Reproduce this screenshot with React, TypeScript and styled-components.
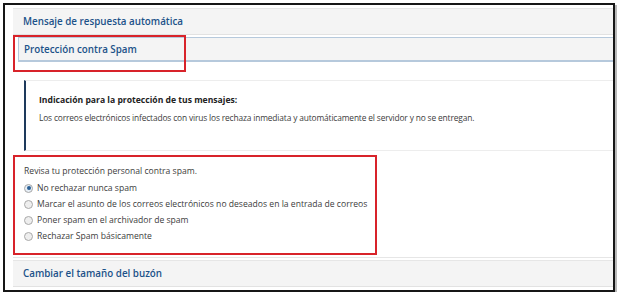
import styled, { createGlobalStyle } from 'styled-components';

const GlobalStyle = createGlobalStyle`
  html, body {
    margin: 0;
    padding: 0;
    background: #ffffff;
  }
  body {
    font-family: 'Open Sans', 'DejaVu Sans', sans-serif;
    color: #333333;
  }
`;

const Frame = styled.div`
  position: relative;
  margin: 3px 0 0 3px;
  width: 608px;
  height: 285px;
  border: 2px solid #161616;
  box-shadow: 2px 2px 0 #b9b9b9;
  overflow: hidden;
  background: #ffffff;
`;

const Content = styled.div`
  display: flex;
  flex-direction: column;
  padding: 3px 0 0 8px;
`;

const PanelHeader = styled.div<{ $active?: boolean }>`
  display: flex;
  align-items: center;
  height: ${(p) => (p.$active ? '22px' : '25px')};
  margin-left: ${(p) => (p.$active ? '5px' : '0')};
  margin-right: -20px;
  padding-left: ${(p) => (p.$active ? '5px' : '10px')};
  background: #f4f4f4;
  border-top: 1px solid ${(p) => (p.$active ? '#b6c9dc' : '#e6e6e6')};
  border-bottom: ${(p) => (p.$active ? '2px solid #b6c9dc' : '1px solid #e2e2e2')};
  border-left: ${(p) => (p.$active ? '1px solid #b6c9dc' : 'none')};
  color: #1c5289;
  font-size: 9.8px;
  font-weight: 600;
`;

const InfoBox = styled.div`
  display: flex;
  flex-direction: column;
  gap: 6px;
  margin: 18px -20px 0 11px;
  padding: 13px 0 27px 13px;
  border-left: 2px solid #1e3a5c;
  border-top: 1px solid #ededed;
  border-bottom: 1px solid #ededed;
  font-size: 8.4px;
  letter-spacing: -0.15px;
  color: #3c3c3c;
`;

const InfoTitle = styled.div`
  font-size: 8.6px;
  font-weight: 700;
  letter-spacing: 0;
  color: #222222;
`;

const Options = styled.div`
  display: flex;
  flex-direction: column;
  margin-top: 11px;
  padding-left: 11px;
  font-size: 8.6px;
  color: #3c3c3c;
`;

const Lead = styled.div`
  height: 18px;
  line-height: 18px;
`;

const OptionRow = styled.label`
  display: flex;
  align-items: center;
  gap: 4px;
  height: 16px;
`;

const Radio = styled.span<{ $checked?: boolean }>`
  position: relative;
  width: 7px;
  height: 7px;
  border-radius: 50%;
  border: 1px solid #a9a9a9;
  background: ${(p) => (p.$checked ? '#e6eef6' : '#eeeeee')};
  flex: none;

  &::after {
    content: '';
    display: ${(p) => (p.$checked ? 'block' : 'none')};
    position: absolute;
    left: 1.5px;
    top: 1.5px;
    width: 4px;
    height: 4px;
    border-radius: 50%;
    background: #2a5f95;
  }
`;

const Divider = styled.div`
  margin: 13px -20px 0 0;
  border-top: 1px solid #e6e6e6;
`;

const BottomPanel = styled(PanelHeader)`
  margin-top: 2px;
`;

const Highlight = styled.div<{ $x: number; $y: number; $w: number; $h: number }>`
  position: absolute;
  left: ${(p) => p.$x}px;
  top: ${(p) => p.$y}px;
  width: ${(p) => p.$w}px;
  height: ${(p) => p.$h}px;
  border: 2px solid #d8232a;
  box-sizing: border-box;
  pointer-events: none;
`;

const options = [
  { label: 'No rechazar nunca spam', checked: true },
  { label: 'Marcar el asunto de los correos electrónicos no deseados en la entrada de correos' },
  { label: 'Poner spam en el archivador de spam' },
  { label: 'Rechazar Spam básicamente' },
];

export default function App() {
  return (
    <>
      <GlobalStyle />
      <Frame>
        <Content>
          <PanelHeader>Mensaje de respuesta automática</PanelHeader>
          <PanelHeader $active style={{ marginTop: 2 }}>
            Protección contra Spam
          </PanelHeader>
          <InfoBox>
            <InfoTitle>Indicación para la protección de tus mensajes:</InfoTitle>
            <div>
              Los correos electrónicos infectados con virus los rechaza inmediata y automáticamente el
              servidor y no se entregan.
            </div>
          </InfoBox>
          <Options>
            <Lead>Revisa tu protección personal contra spam.</Lead>
            {options.map((o) => (
              <OptionRow key={o.label}>
                <Radio $checked={o.checked} />
                <span>{o.label}</span>
              </OptionRow>
            ))}
          </Options>
          <Divider />
          <BottomPanel>Cambiar el tamaño del buzón</BottomPanel>
        </Content>
        <Highlight $x={8} $y={30} $w={173} $h={37} />
        <Highlight $x={8} $y={150} $w={364} $h={100} />
      </Frame>
    </>
  );
}
